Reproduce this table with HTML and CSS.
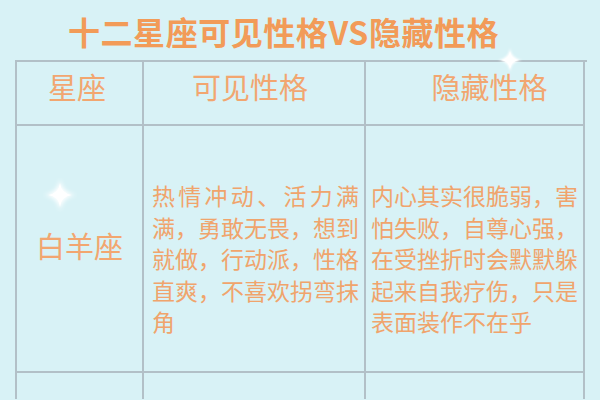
FILE: index.html
```html
<!DOCTYPE html>
<html lang="zh-CN">
<head>
<meta charset="utf-8">
<link rel="stylesheet" href="styles.css">
</head>
<body>
<div class="page">
  <h1 class="title">十二星座可见性格VS隐藏性格</h1>
  <div class="table">
    <svg class="sparkle sparkle-top" viewBox="0 0 40 40" width="26" height="26"><defs><filter id="g1" x="-50%" y="-50%" width="200%" height="200%"><feGaussianBlur stdDeviation="1.6"/></filter></defs><path d="M20 2 Q22 18 38 20 Q22 22 20 38 Q18 22 2 20 Q18 18 20 2Z" fill="#ffffff" filter="url(#g1)"/><path d="M20 6 Q21.5 18.5 34 20 Q21.5 21.5 20 34 Q18.5 21.5 6 20 Q18.5 18.5 20 6Z" fill="#ffffff"/></svg>
    <div class="cell head h1c">星座</div>
    <div class="cell head h2c">可见性格</div>
    <div class="cell head h3c">隐藏性格</div>

    <div class="cell sign">
      <svg class="sparkle" viewBox="0 0 40 40" width="34" height="34"><defs><filter id="g2" x="-50%" y="-50%" width="200%" height="200%"><feGaussianBlur stdDeviation="2.2"/></filter></defs><path d="M20 1 Q22 18 39 20 Q22 22 20 39 Q18 22 1 20 Q18 18 20 1Z" fill="#ffffff" filter="url(#g2)"/><path d="M20 6 Q21.5 18.5 34 20 Q21.5 21.5 20 34 Q18.5 21.5 6 20 Q18.5 18.5 20 6Z" fill="#ffffff"/></svg>
      <div class="sign-name">白羊座</div>
    </div>
    <div class="cell body b2"><p class="txt">热情冲动、活力满满，勇敢无畏，想到就做，行动派，性格直爽，不喜欢拐弯抹角</p></div>
    <div class="cell body b3"><p class="txt">内心其实很脆弱，害怕失败，自尊心强，在受挫折时会默默躲起来自我疗伤，只是表面装作不在乎</p></div>

    <div class="cell next"></div>
    <div class="cell next"></div>
    <div class="cell next"></div>
  </div>
</div>
</body>
</html>
```
FILE: styles.css
```css
html, body {
  margin: 0;
  padding: 0;
  background: #d8f2f6;
}
body {
  width: 600px;
  height: 400px;
  overflow: hidden;
  font-family: "Noto Sans CJK SC", "Noto Sans", sans-serif;
}
.page {
  display: flex;
  flex-direction: column;
}
.title {
  margin: 0;
  padding: 11px 0 0 68px;
  height: 40px;
  line-height: 40px;
  font-size: 32px;
  font-weight: 700;
  color: #f29b58;
  letter-spacing: 0.55px;
  white-space: nowrap;
}
.table {
  position: relative;
  margin: 9px 0 0 15px;
  width: 570px;
  display: grid;
  grid-template-columns: 127px 222px 219px;
  grid-template-rows: 64px 247px 26px;
  border-left: 2px solid #b2c0c7;
  border-top: 2px solid #b2c0c7;
}
.cell {
  box-sizing: border-box;
  border-right: 2px solid #b2c0c7;
  border-bottom: 2px solid #b2c0c7;
}
.next {
  border-bottom: none;
}
.head {
  display: flex;
  justify-content: center;
  align-items: flex-start;
  padding-top: 6px;
  font-size: 29px;
  line-height: 36px;
  color: #f2a670;
}
.h1c { padding-right: 5px; }
.h2c { padding-right: 8px; }
.h3c { padding-left: 30px; }
.sign {
  display: flex;
  flex-direction: column;
  align-items: center;
  padding-top: 52px;
}
.sign .sparkle {
  margin-right: 39px;
}
.sign-name {
  margin-top: 15px;
  font-size: 29px;
  line-height: 36px;
  color: #f2a670;
}
.body {
  padding-top: 54px;
}
.b2 { padding-left: 8px; }
.b3 { padding-left: 5px; }
.txt {
  margin: 0;
  width: 207px;
  font-size: 23px;
  line-height: 31.5px;
  text-align: justify;
  color: #f0a46c;
}
.sparkle-top {
  position: absolute;
  left: 480px;
  top: -15px;
}
```
